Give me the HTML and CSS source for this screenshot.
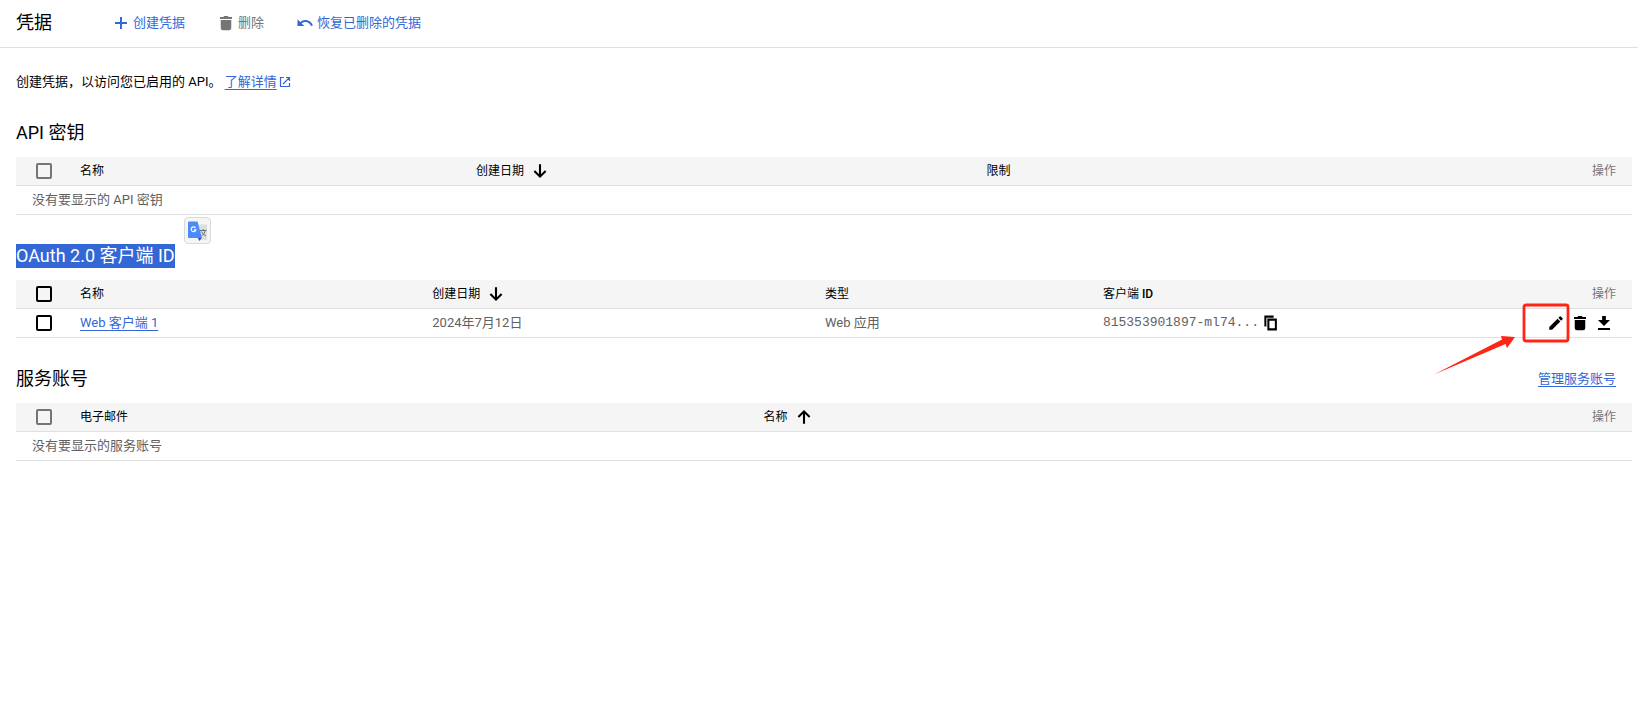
FILE: index.html
```html
<!DOCTYPE html>
<html lang="zh-CN">
<head>
<meta charset="utf-8">
<title>凭据</title>
<link rel="stylesheet" href="styles.css">
</head>
<body>
<svg class="sprite" aria-hidden="true">
  <symbol id="trash" viewBox="0 0 24 24"><path d="M5 8h14v10.500a3 3 0 0 1-3 3H8a3 3 0 0 1-3-3zM4 4h4.500l1-1.500h5l1 1.500H20v2.500H4z"/></symbol>
  <symbol id="down" viewBox="0 0 24 24"><path d="M12 3v16M4.500 12l7.500 7.500 7.500-7.500" fill="none" stroke="currentColor" stroke-width="2.800"/></symbol>
  <symbol id="up" viewBox="0 0 24 24"><path d="M12 21V5M4.500 12L12 4.500l7.500 7.500" fill="none" stroke="currentColor" stroke-width="2.800"/></symbol>
</svg>
<header class="toolbar">
  <h1 class="title">凭据</h1>
  <div class="actions">
    <button class="action" type="button"><svg class="icon" viewBox="0 0 24 24"><path d="M12 4v16M4 12h16" fill="none" stroke="currentColor" stroke-width="2.600"/></svg>创建凭据</button>
    <button class="action" type="button" disabled><svg class="icon"><use href="#trash"/></svg>删除</button>
    <button class="action" type="button"><svg class="icon" viewBox="0 0 24 24"><path d="M12.500 8c-2.650 0-5.050.990-6.900 2.600L2 7v9h9l-3.620-3.620c1.390-1.160 3.160-1.880 5.120-1.880 3.540 0 6.550 2.310 7.600 5.500l2.370-.780C21.080 11.030 17.150 8 12.500 8z"/></svg>恢复已删除的凭据</button>
  </div>
</header>
<main class="content">
  <p class="intro">创建凭据，以访问您已启用的 API。 <a class="link" href="#">了解详情</a><svg class="external" viewBox="0 0 12 12"><path d="M5 1.500H1.500v9h9V7M7 1.500h3.500V5M10.500 1.500L4 8" fill="none" stroke="currentColor" stroke-width="1.200"/></svg></p>

  <section class="section">
    <div class="heading"><h2 class="subtitle">API 密钥</h2></div>
    <table class="table">
      <colgroup><col class="col-check"><col class="col-key-name"><col class="col-key-date"><col><col class="col-ops"></colgroup>
      <thead><tr>
        <th class="check"><input class="box" type="checkbox" aria-label="全选 API 密钥" disabled></th>
        <th>名称</th>
        <th><span class="sort">创建日期<svg class="icon"><use href="#down"/></svg></span></th>
        <th>限制</th>
        <th class="ops">操作</th>
      </tr></thead>
      <tbody><tr><td colspan="5">没有要显示的 API 密钥</td></tr></tbody>
    </table>
  </section>

  <section class="section">
    <div class="heading">
      <h2 class="subtitle selected">OAuth 2.0 客户端 ID</h2>
      <button class="translate" type="button" aria-label="翻译">
        <svg class="translate-icon" viewBox="0 0 20 20"><path d="M9 3.500h10V19h-6z" fill="#dedede"/><path d="M9.500 16.500h4.500L11.500 20z" fill="#3547b5"/><path d="M0 1.500Q0 .500 1 .500h8.500L14 17H1q-1 0-1-1z" fill="#4c8bf5"/><path d="M7.500 6.800A2.400 2.400 0 1 0 7.900 8.900H5.800" fill="none" stroke="#fff" stroke-width="1.100"/><path d="M12 9.500h6.500M15.300 8v1.500M17.300 9.500q-.800 3.500-3.300 5.300M13.500 10.500q1.500 3.300 4.500 4.500" fill="none" stroke="#62777f" stroke-width="1"/></svg>
      </button>
    </div>
    <table class="table">
      <colgroup><col class="col-check"><col class="col-client-name"><col class="col-client-date"><col class="col-client-type"><col><col class="col-ops"></colgroup>
      <thead><tr>
        <th class="check"><input class="box" type="checkbox" aria-label="全选客户端"></th>
        <th>名称</th>
        <th><span class="sort">创建日期<svg class="icon"><use href="#down"/></svg></span></th>
        <th>类型</th>
        <th>客户端 <span class="latin">ID</span></th>
        <th class="ops">操作</th>
      </tr></thead>
      <tbody><tr>
        <td class="check"><input class="box" type="checkbox" aria-label="选择 Web 客户端 1"></td>
        <td><a class="link" href="#">Web 客户端 1</a></td>
        <td>2024年7月12日</td>
        <td>Web 应用</td>
        <td><span class="client"><span class="client-id">815353901897-ml74...</span><button class="tool" type="button" aria-label="复制"><svg class="icon" viewBox="0 0 24 24"><path d="M4.500 16.500V3.500h11M8.500 7.500h10v13h-10z" fill="none" stroke="currentColor" stroke-width="2.700"/></svg></button></span></td>
        <td class="ops"><div class="tools">
          <button class="tool" type="button" aria-label="修改"><svg class="icon" viewBox="0 0 24 24"><path d="M3 17.250V21h3.750L17.810 9.940l-3.750-3.750L3 17.250zM20.710 7.040a1 1 0 0 0 0-1.410l-2.340-2.340a1 1 0 0 0-1.410 0l-1.830 1.830 3.750 3.750 1.830-1.830z"/></svg></button>
          <button class="tool" type="button" aria-label="删除"><svg class="icon"><use href="#trash"/></svg></button>
          <button class="tool" type="button" aria-label="下载"><svg class="icon" viewBox="0 0 24 24"><path d="M9.500 2.500h5V8H20l-8 8-8-8h5.500zM4 18.500h16v2.700H4z"/></svg></button>
        </div></td>
      </tr></tbody>
    </table>
    <svg class="callout" viewBox="0 0 142 78" aria-hidden="true"><rect x="94" y="5" width="44" height="36" rx="2" fill="none" stroke="#ff2418" stroke-width="2.800"/><path d="M4 74.500L72 39.500L71 36L85 37L77 48L75.500 44Z" fill="#ff2418"/></svg>
  </section>

  <section class="section">
    <div class="heading"><h2 class="subtitle">服务账号</h2><a class="link manage" href="#">管理服务账号</a></div>
    <table class="table">
      <colgroup><col class="col-check"><col class="col-mail"><col><col class="col-ops"></colgroup>
      <thead><tr>
        <th class="check"><input class="box" type="checkbox" aria-label="全选服务账号" disabled></th>
        <th>电子邮件</th>
        <th><span class="sort">名称<svg class="icon"><use href="#up"/></svg></span></th>
        <th class="ops">操作</th>
      </tr></thead>
      <tbody><tr><td colspan="4">没有要显示的服务账号</td></tr></tbody>
    </table>
  </section>
</main>
</body>
</html>
```
FILE: styles.css
```css
* { box-sizing: border-box; }

body {
  margin: 0;
  background: #fff;
  color: #000;
  font: 13px/20px Roboto, "Noto Sans CJK SC", sans-serif;
}

button {
  padding: 0;
  border: 0;
  background: none;
  color: inherit;
  font: inherit;
}

.sprite { display: none; }

.icon {
  display: block;
  width: 18px;
  height: 18px;
  flex: none;
  fill: currentColor;
}

.toolbar {
  display: flex;
  align-items: center;
  gap: 60px;
  height: 48px;
  padding: 0 16px 1px;
  border-bottom: 1px solid #e0e0e0;
}

.title,
.subtitle {
  margin: 0;
  font-size: 18px;
  font-weight: 400;
  line-height: 24px;
}

.actions { display: flex; gap: 32px; }

.action {
  display: flex;
  align-items: center;
  gap: 3px;
  color: #3367d6;
}

.action:disabled { color: #757575; }

.content { padding: 24px 6px 0 16px; }

.intro { margin: 0; }

.link {
  color: #3367d6;
  text-decoration: underline;
  text-underline-offset: 3px;
}

.external {
  width: 12px;
  height: 12px;
  margin-left: 2px;
  color: #3367d6;
  vertical-align: -2px;
}

.section { position: relative; margin-top: 29px; }

.heading {
  display: flex;
  align-items: center;
  position: relative;
  margin-bottom: 12px;
}

.selected { background: #3367d6; color: #fff; }

.manage { margin: 0 16px 0 auto; }

.table {
  width: 100%;
  border-collapse: separate;
  border-spacing: 0;
  table-layout: fixed;
}

.table th,
.table td {
  height: 29px;
  padding: 0 16px;
  border-bottom: 1px solid #e0e0e0;
  text-align: left;
  white-space: nowrap;
}

.table th {
  background: #f5f5f5;
  font-size: 12px;
  font-weight: 400;
}

.table td { color: #616161; }

.table .check { padding: 0 0 0 20px; }

.table .ops { text-align: right; }

.table th.ops { color: #757575; }

.latin { font-weight: 500; }

.col-check { width: 48px; }
.col-ops { width: 120px; }
.col-key-name { width: 24.5%; }
.col-key-date { width: 31.6%; }
.col-client-name { width: 21.8%; }
.col-client-date { width: 24.3%; }
.col-client-type { width: 17.2%; }
.col-mail { width: 42.3%; }

.box {
  display: block;
  width: 16px;
  height: 16px;
  margin: 0;
  border: 2px solid #000;
  border-radius: 2px;
  appearance: none;
}

.box:disabled { border-color: #757575; }

.sort { display: flex; align-items: center; gap: 7px; }

.client { display: flex; align-items: center; }

.client-id { font-family: "Liberation Mono", monospace; }

.tools { display: flex; justify-content: flex-end; }

.tool {
  display: flex;
  align-items: center;
  justify-content: center;
  width: 24px;
  height: 24px;
  color: #000;
}

.translate {
  display: flex;
  align-items: center;
  justify-content: center;
  position: absolute;
  top: -27px;
  left: 168px;
  width: 27px;
  height: 27px;
  border: 1px solid #dadada;
  border-radius: 4px;
  background: #f5f5f5;
}

.translate-icon { width: 20px; height: 20px; }

.callout {
  position: absolute;
  top: 56px;
  right: 60px;
  width: 142px;
  height: 78px;
  pointer-events: none;
}
```
